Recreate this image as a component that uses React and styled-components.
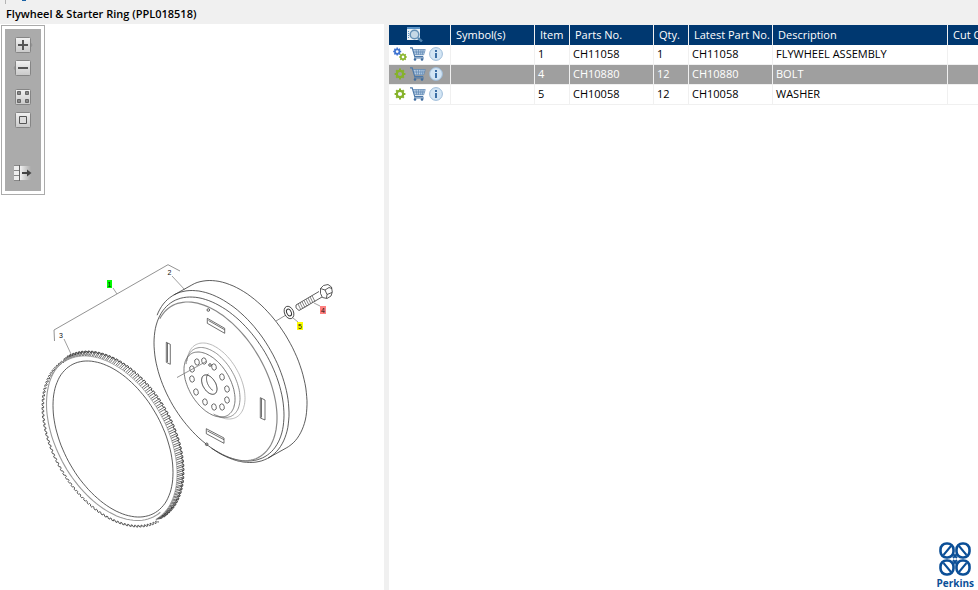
import React from "react"

import styled, { createGlobalStyle } from "styled-components"


const columns = [
  { key: 'tools', label: '', width: 62 },
  { key: 'symbols', label: 'Symbol(s)', width: 84 },
  { key: 'item', label: 'Item', width: 35 },
  { key: 'partNo', label: 'Parts No.', width: 84 },
  { key: 'qty', label: 'Qty.', width: 35 },
  { key: 'latestNo', label: 'Latest Part No.', width: 84 },
  { key: 'description', label: 'Description', width: 175 },
  { key: 'cut', label: 'Cut Off', width: 84 }
]

const parts = [
  { item: '1', partNo: 'CH11058', qty: '1', latestNo: 'CH11058', description: 'FLYWHEEL ASSEMBLY', assembly: true },
  { item: '4', partNo: 'CH10880', qty: '12', latestNo: 'CH10880', description: 'BOLT', selected: true },
  { item: '5', partNo: 'CH10058', qty: '12', latestNo: 'CH10058', description: 'WASHER' }
]

const boltHoles = [
  [192, 379], [196, 392], [205, 402], [214, 407], [222, 407], [227, 400],
  [227, 389], [222, 377], [214, 367], [204, 361], [197, 362], [192, 369]
]


// a tilted circle: a, b are the half width and half height, r is the skew
const pointAt = ([cx, cy, a, b, r], deg) => {
  const t = deg * Math.PI / 180
  const s = Math.sqrt(1 - r * r)
  return [
    (cx + a * Math.cos(t)).toFixed(1),
    (cy + b * (r * Math.cos(t) + s * Math.sin(t))).toFixed(1)
  ].join(' ')
}

const arc = (shape, from = 0, to = 360) => {
  const points = []
  for (let t = from; t <= to; t += 3) points.push(pointAt(shape, t))
  return 'M' + points.join('L')
}

const teethEdge = (shape, from, to) => {
  const [cx, cy, a, b, r] = shape
  const root = [cx, cy, a - 1.6, b - 1.6, r]
  const points = []
  for (let t = from; t < to; t += 3) {
    points.push(pointAt(shape, t), pointAt(shape, t + 1.3), pointAt(root, t + 1.6), pointAt(root, t + 2.7))
  }
  return 'M' + points.join('L')
}

const teethFaces = (front, back, from, to) => {
  let d = ''
  for (let t = from; t < to; t += 3) {
    d += `M${pointAt(front, t)}L${pointAt(back, t)}M${pointAt(front, t + 1.3)}L${pointAt(back, t + 1.3)}`
  }
  return d
}

const gearTeeth = (cx, cy, radius) => {
  let d = ''
  for (let i = 0; i < 8; i++) {
    const t = i * Math.PI / 4
    const x = Math.cos(t)
    const y = Math.sin(t)
    d += `M${(cx + x * (radius - 2)).toFixed(1)} ${(cy + y * (radius - 2)).toFixed(1)}`
    d += `L${(cx + x * radius).toFixed(1)} ${(cy + y * radius).toFixed(1)}`
  }
  return d
}


const Gear = ({ cx, cy, radius, color, ring = 2.4 }) => (
  <g stroke={color}>
    <path d={gearTeeth(cx, cy, radius)} strokeWidth={ring - 0.4} />
    <circle cx={cx} cy={cy} r={radius - ring + 0.2} strokeWidth={ring - 0.2} />
  </g>
)

const GearIcon = ({ assembly }) => (
  <svg width="14" height="14" viewBox="0 0 14 14" fill="none">
    {assembly
      ? <><Gear cx={4.2} cy={4.6} radius={4} ring={1.9} color="#3f73d0" /><Gear cx={10} cy={10} radius={3.8} ring={1.8} color="#8ab52c" /></>
      : <Gear cx={7} cy={7} radius={5.4} color="#86b22a" />}
  </svg>
)

const CartIcon = () => (
  <svg width="16" height="14" viewBox="0 0 16 14" fill="none">
    <path d="M3 2.5h12l-1.5 5.5h-9z" fill="#b5cbe2" />
    <path d="M0 .8h2.2l2.6 8.8h8.4" stroke="#4c78a8" strokeWidth="1.2" />
    <path d="M3 2.5h12.3l-1.6 5.3H4.4M3.6 5h11M6 2.5l.8 5.3M8.5 2.5v5.3M11 2.5l-.4 5.3M13.2 2.5l-.9 5.3" stroke="#5d86b3" strokeWidth=".7" />
    <path d="M4 11h10" stroke="#4c78a8" />
    <circle cx="5" cy="12.5" r="1.3" fill="#3f6c9e" />
    <circle cx="12" cy="12.5" r="1.3" fill="#3f6c9e" />
  </svg>
)

const InfoIcon = () => (
  <svg width="14" height="14" viewBox="0 0 14 14">
    <circle cx="7" cy="7" r="6.4" fill="#d3e5f4" stroke="#9dbcd9" />
    <path d="M6 3h2v2H6zM6 6h2v5H6z" fill="#3b6ea5" />
  </svg>
)

const PreviewIcon = () => (
  <svg width="16" height="16" viewBox="0 0 16 16" fill="none">
    <path d="M0 1h13v13H0z" fill="#e9f1f8" />
    <path d="M0 2h13" stroke="#5b93c6" strokeWidth="2" />
    <path d="M1.5 5v8" stroke="#5b93c6" strokeDasharray="1 1" />
    <circle cx="7.5" cy="8.5" r="4.3" fill="#c6d8e6" stroke="#6590b5" strokeWidth="1.5" />
    <path d="M11 12l4 3.5" stroke="#4f82ae" strokeWidth="2.4" />
  </svg>
)

const ToolIcon = ({ kind }) => (
  <svg width="20" height="18" viewBox="0 0 20 18" fill="none">
    <defs>
      <linearGradient id={`face-${kind}`} x2="0" y2="1">
        <stop stopColor="#f2f2f2" />
        <stop offset="1" stopColor="#c9c9c9" />
      </linearGradient>
      <linearGradient id={`fade-${kind}`}>
        <stop stopColor="#f2f2f2" />
        <stop offset="1" stopColor="#ababab" />
      </linearGradient>
    </defs>
    {kind === 'expand' && <path d="M17 6l2 3-2 3" fill="#eee" stroke="#888" />}
    {kind === 'collapse' && <path d="M3 6L1 9l2 3" fill="#eee" stroke="#888" />}
    {kind !== 'export' && <rect x="2.5" y="1.5" width="15" height="15" rx="1" fill={`url(#face-${kind})`} stroke="#858585" />}
    {kind === 'expand' && <path d="M5 9h10M10 4v10" stroke="#555" strokeWidth="2" />}
    {kind === 'collapse' && <path d="M5 9h10" stroke="#555" strokeWidth="2" />}
    {kind === 'tiles' && <path d="M4.5 3.5h3v3h-3zM12.5 3.5h3v3h-3zM4.5 11.5h3v3h-3zM12.5 11.5h3v3h-3z" fill="#888" stroke="#666" />}
    {kind === 'single' && <path d="M6.5 5.5h7v7h-7z" fill="#ddd" stroke="#555" />}
    {kind === 'export' && (
      <>
        <path d="M7 2h11v14H7z" fill={`url(#fade-${kind})`} />
        <path d="M1 2h5v4H1zM1 7h5v4H1zM1 12h5v4H1z" fill="#eee" />
        <path d="M1 6.5h5M1 11.5h5M1 1.5h5M1 16.5h5" stroke="#888" />
        <path d="M6.5 1v16" stroke="#666" />
        <path d="M9 9h6" stroke="#444" strokeWidth="2" />
        <path d="M14 5.5L18.5 9 14 12.5z" fill="#444" />
      </>
    )}
  </svg>
)


const plate = [219, 379, 65, 82, 0.44]
const rim = [221, 376.5, 68, 86, 0.43]
const body = [239, 366.5, 68, 86, 0.43]
const ringFront = [111, 441, 69, 86, 0.4]
const ringTeeth = [111, 440, 66, 84, 0.4]
const ringBack = [115, 437, 69, 86, 0.4]
const ringFace = [111, 437.5, 64.5, 83, 0.41]

const Diagram = () => (
  <DiagramSvg viewBox="0 255 384 280" role="img" aria-label="Flywheel and starter ring">
    <g fill="none" stroke="#333" strokeWidth="0.8">
      <path d={arc(body, 226, 406)} />
      <path d={`M${pointAt(rim, 226)}L${pointAt(body, 226)}M${pointAt(rim, 46)}L${pointAt(body, 46)}`} />
      <path d={arc(rim, 200, 460)} />
      <path d={arc(plate)} />
      <path d={arc([215.5, 381.5, 61.5, 79.5, 0.455], 205, 430)} stroke="#888" strokeWidth="1.2" />

      <path d={arc([216, 381, 29, 38, 0.45], 185, 450)} stroke="#aaa" />
      <path d={arc([213, 382.5, 27, 35, 0.45], 185, 450)} stroke="#777" />
      <path d={arc([209.5, 384.5, 25.5, 32.5, 0.45])} stroke="#555" />
      <path d={arc([209.3, 384.6, 7.7, 9.7, 0.45])} strokeWidth="1" />
      <path d={arc([213, 382.5, 6.5, 9, 0.45], 90, 225)} />
      {boltHoles.map(([x, y]) => <ellipse key={`${x}-${y}`} cx={x} cy={y} rx="2.3" ry="3.2" transform={`rotate(-12 ${x} ${y})`} stroke="#555" />)}
      <circle cx="210" cy="365" r="1.3" />
      <path d="M177 377.5L207 361M276 321l10-6" stroke="#777" />

      <path d="M207.3 318.3l17.4 10v5l-17.4-10zM208.5 320.5l16 9.2" strokeWidth="0.7" />
      <path d="M166.3 342.3l4 2v20l-4-2zM167.5 343v19" strokeWidth="0.7" />
      <path d="M260.3 397.7l4.7 2.3v20l-4.7-2zM261.5 398.5v19" strokeWidth="0.7" />
      <path d="M206.3 428.7l17.7 9.3v5.3l-17.7-9.6zM207.5 431l16.5 8.7" strokeWidth="0.7" />
      <circle cx="208.3" cy="310" r="1.3" />
      <circle cx="206.7" cy="444.3" r="1.3" />

      <path d={teethEdge(ringBack, 226, 406)} />
      <path d={teethEdge(ringFront, 46, 226)} />
      <path d={teethFaces(ringTeeth, ringBack, 223, 408)} strokeWidth="0.7" />
      <path d={arc(ringTeeth, 226, 406)} stroke="#888" strokeWidth="0.6" />
      <path d={arc(ringFace, 40, 250)} stroke="#999" strokeWidth="1.1" />
      <path d={arc([113, 439, 60, 78, 0.43])} />

      <path d="M54.5 341L54 330l114-65.3 12 6.3" stroke="#777" />
      <path d="M113 288l4 6M172 276l13 14M64 339l7 15M320 306l-6-3M298 322l-5-4" stroke="#888" />

      <ellipse cx="289" cy="312.5" rx="4.5" ry="6.5" transform="rotate(-24 289 312.5)" />
      <ellipse cx="289" cy="312.5" rx="2.2" ry="3.6" transform="rotate(-24 289 312.5)" strokeWidth="1" />
      <path d="M296 305l23-13.5M299 310.5l23-13.5M296 305q-1.5 3 3 5.5" />
      <path d="M298 304l3 6M300 302.8l3 6M302 301.6l3 6M304 300.4l3 6M306 299.2l3 6M308 298l3 6M310 296.8l3 6M312 295.6l3 6" stroke="#666" />
      <path d="M320.5 288.5l3-3 4.5-1 3.5 2.5.8 5-1.3 4-4 2.5-4.5-1-2-4zM320.5 288.5l4.5 1.5 2 4.5-.5 3.5M325 290l4-2.5 3 1M327 294.5l5-2" />
    </g>

    <rect x="107" y="280" width="5" height="8" fill="#0f0" />
    <rect x="320" y="306" width="6" height="8" fill="#ff8080" />
    <rect x="297" y="322" width="6" height="8" fill="#ff0" />
    <g fontFamily="'Liberation Sans', sans-serif" fontSize="7" textAnchor="middle" fill="#111">
      <text x="109.5" y="287">1</text>
      <text x="169.5" y="275">2</text>
      <text x="61" y="338">3</text>
      <text x="323" y="313">4</text>
      <text x="300" y="329">5</text>
    </g>
  </DiagramSvg>
)


const Logo = () => (
  <LogoBox>
    <svg width="34" height="34" viewBox="0 0 34 34" fill="none" stroke="#0b4f97" strokeWidth="2.6">
      <rect x="2.5" y="1.5" width="13" height="14" rx="6" />
      <rect x="18.5" y="1.5" width="13" height="14" rx="6" />
      <rect x="2.5" y="18.5" width="13" height="14" rx="6" />
      <rect x="18.5" y="18.5" width="13" height="14" rx="6" />
      <path d="M5.5 13L13 4M21 4l7.5 9M5.5 21l7.5 9M21 30l7.5-9" strokeWidth="2" />
      <path d="M15 12l4 4M19 12l-4 4M15 18l4 4M19 18l-4 4" strokeWidth="2" />
    </svg>
    <span>Perkins</span>
  </LogoBox>
)


const App = () => (
  <Page>
    <GlobalStyle />
    <TopStrip><TabEdge /><TabMark /></TopStrip>
    <TitleBar>Flywheel &amp; Starter Ring (PPL018518)</TitleBar>
    <Panes>
      <DiagramPane>
        <Toolbar>
          <ToolButton aria-label="Expand"><ToolIcon kind="expand" /></ToolButton>
          <ToolButton aria-label="Collapse"><ToolIcon kind="collapse" /></ToolButton>
          <ToolButton aria-label="Show all" $gap={6}><ToolIcon kind="tiles" /></ToolButton>
          <ToolButton aria-label="Fit"><ToolIcon kind="single" /></ToolButton>
          <ToolButton aria-label="Detach" $gap={30}><ToolIcon kind="export" /></ToolButton>
        </Toolbar>
        <Diagram />
      </DiagramPane>
      <Splitter />
      <PartsPane>
        <PartsTable>
          <colgroup>
            {columns.map(col => <col key={col.key} style={{ width: col.width }} />)}
          </colgroup>
          <thead>
            <tr>
              {columns.map(col => (
                <HeadCell key={col.key} scope="col" $icon={col.key === 'tools'}>
                  {col.key === 'tools' ? <PreviewIcon /> : col.label}
                </HeadCell>
              ))}
            </tr>
          </thead>
          <tbody>
            {parts.map(part => (
              <Row key={part.item} $selected={part.selected}>
                <Cell>
                  <RowTools>
                    <IconButton aria-label="Details"><GearIcon assembly={part.assembly} /></IconButton>
                    <IconButton aria-label="Add to cart"><CartIcon /></IconButton>
                    <IconButton aria-label="Information"><InfoIcon /></IconButton>
                  </RowTools>
                </Cell>
                {columns.slice(1).map(col => <Cell key={col.key}>{part[col.key]}</Cell>)}
              </Row>
            ))}
          </tbody>
        </PartsTable>
        <Logo />
      </PartsPane>
    </Panes>
  </Page>
)


const GlobalStyle = createGlobalStyle`
  body {
    margin: 0;
    background: #fff;
    font-family: "Open Sans", "Noto Sans", sans-serif;
    font-size: 11px;
    color: #000;
  }
  svg {
    display: block;
  }
`

const Page = styled.div`
  display: flex;
  flex-direction: column;
  min-height: 100vh;
  overflow: hidden;
`

const TopStrip = styled.div`
  display: flex;
  gap: 16px;
  height: 4px;
  padding-left: 5px;
  background: #f0f0f0;
`

const TabEdge = styled.span`
  width: 1px;
  background: #b4b4b4;
`

const TabMark = styled.span`
  width: 4px;
  height: 1px;
  background: #1a62a5;
`

const TitleBar = styled.h1`
  margin: 0;
  padding: 0 6px;
  background: #f0f0f0;
  font-size: 11px;
  font-weight: 600;
  line-height: 20px;
`

const Panes = styled.main`
  flex: 1;
  display: grid;
  grid-template-columns: minmax(0, 384fr) 5px minmax(0, 589fr);
`

const DiagramPane = styled.section`
  padding-top: 1px;
`

const Toolbar = styled.div`
  display: flex;
  flex-direction: column;
  align-items: center;
  width: 42px;
  height: 158px;
  margin: 0 0 60px 1px;
  padding-top: 10px;
  border: 1px solid #ababab;
  background: #ababab;
  box-shadow: inset 0 0 0 3px #fff;
`

const ToolButton = styled.button`
  padding: 0;
  margin-top: ${({ $gap }) => $gap || 0}px;
  margin-bottom: 5px;
  border: 0;
  background: none;
`

const DiagramSvg = styled.svg`
  width: 100%;
`

const Splitter = styled.div`
  background: #f0f0f0;
`

const PartsPane = styled.section`
  display: flex;
  flex-direction: column;
  justify-content: space-between;
  overflow: hidden;
  border-top: 1px solid #f0f0f0;
`

const PartsTable = styled.table`
  table-layout: fixed;
  width: 643px;
  border-spacing: 0;
`

const HeadCell = styled.th`
  height: 20px;
  padding: ${({ $icon }) => $icon ? '1px 0 0 18px' : '0 0 0 5px'};
  box-sizing: border-box;
  border-right: 1px solid #f0f0f0;
  background: #003870;
  color: #fff;
  font-weight: 400;
  line-height: 20px;
  text-align: left;
  vertical-align: top;
  white-space: nowrap;
`

const Cell = styled.td`
  height: 20px;
  padding: 0 0 0 3px;
  box-sizing: border-box;
  border-right: 1px solid #f0f0f0;
  border-bottom: 1px solid #f0f0f0;
  line-height: 17px;
  vertical-align: top;
  white-space: nowrap;
`

const Row = styled.tr`
  background: ${({ $selected }) => $selected ? '#9f9f9f' : '#fff'};
  color: ${({ $selected }) => $selected ? '#fff' : '#000'};
`

const RowTools = styled.div`
  display: flex;
  align-items: center;
  gap: 3px;
  height: 18px;
  padding-left: 1px;
`

const IconButton = styled.button`
  padding: 0;
  border: 0;
  background: none;
`

const LogoBox = styled.div`
  display: flex;
  flex-direction: column;
  align-items: center;
  align-self: flex-end;
  padding-right: 4px;
  color: #0b4f97;
  font-size: 10px;
  font-weight: 700;
  line-height: 14px;
`

export default App
